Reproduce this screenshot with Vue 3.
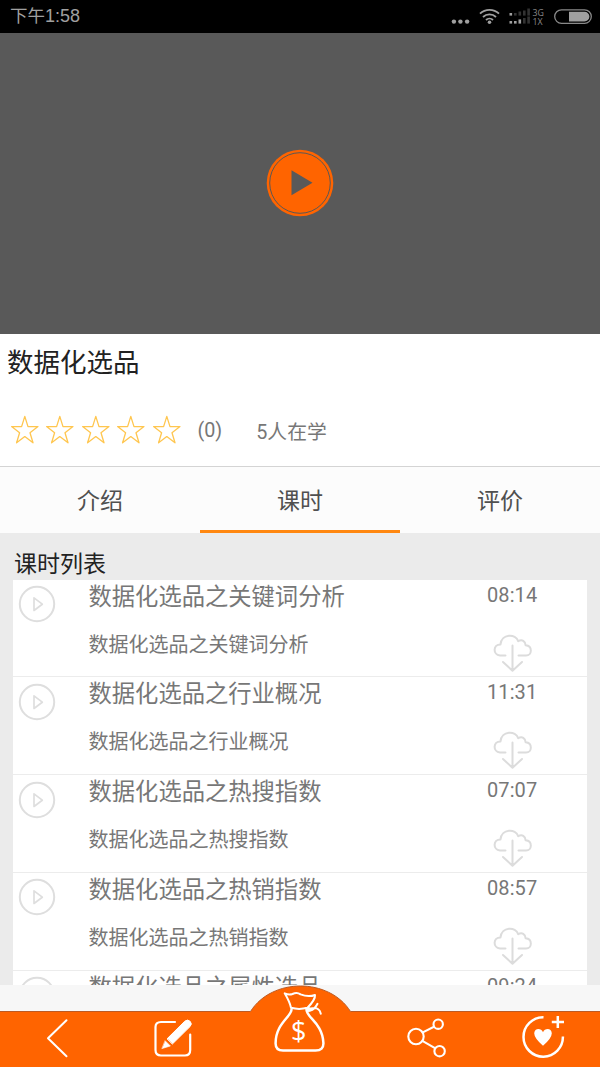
<script setup>
const stars = [0, 1, 2, 3, 4]
const tabs = ['介绍', '课时', '评价']
const lessons = [
  { title: '数据化选品之关键词分析', time: '08:14' },
  { title: '数据化选品之行业概况', time: '11:31' },
  { title: '数据化选品之热搜指数', time: '07:07' },
  { title: '数据化选品之热销指数', time: '08:57' },
  { title: '数据化选品之属性选品', time: '09:24' },
]
</script>

<template>
  <div class="screen">
    <header class="status">
      <span class="clock">下午<span class="digits">1:58</span></span>
      <svg class="status-icons" width="150" height="33" viewBox="0 0 150 33">
        <g fill="#a0a0a0">
          <circle cx="3.9" cy="21.6" r="2.2" /><circle cx="10.4" cy="21.6" r="2.2" /><circle cx="17.1" cy="21.6" r="2.2" />
          <circle cx="39.5" cy="22.3" r="1.8" />
        </g>
        <g fill="none" stroke="#a0a0a0" stroke-width="1.8">
          <path d="M30 13.7a13.5 13.5 0 0 1 19 0" />
          <path d="M33 17a9.3 9.3 0 0 1 13 0" />
          <path d="M36 20a5 5 0 0 1 7 0" />
        </g>
        <g fill="#a0a0a0">
          <rect x="59.5" y="13" width="2.6" height="2.6" />
          <rect x="59.5" y="21" width="2.6" height="2.6" /><rect x="64" y="21" width="2.6" height="2.6" /><rect x="68.5" y="19.4" width="2.6" height="4.2" />
        </g>
        <g fill="#333">
          <rect x="64" y="13" width="2.6" height="2.6" /><rect x="68.5" y="11.5" width="2.6" height="4.1" /><rect x="73" y="10.5" width="2.6" height="5.1" /><rect x="77.3" y="8.5" width="2.6" height="7.1" />
          <rect x="73" y="18" width="2.6" height="5.6" /><rect x="77.3" y="16.5" width="2.6" height="7.1" />
        </g>
        <text x="82.5" y="16" class="net">3G</text>
        <text x="82.5" y="24.5" class="net">1X</text>
        <rect x="104.7" y="9.8" width="36.6" height="13.6" rx="6.8" fill="none" stroke="#8a8a8a" stroke-width="1.3" />
        <path d="M119 11.7h15.5a4.9 4.9 0 0 1 0 9.8H119z" fill="#a0a0a0" />
      </svg>
    </header>

    <section class="video">
      <svg width="68" height="68" viewBox="0 0 68 68">
        <circle cx="34" cy="34" r="33.3" fill="#ff6400" />
        <circle cx="34" cy="34" r="30.3" fill="none" stroke="#5a5855" stroke-width="1" />
        <path d="M25.5 21.3V46.3L46.5 33.8z" fill="#595959" />
      </svg>
    </section>

    <section class="info">
      <h1>数据化选品</h1>
      <div class="rating">
        <svg v-for="s in stars" :key="s" class="star" width="35.6" height="32" viewBox="0 0 35.6 32">
          <path d="M17.8 1.4L21 11.6H31L23 17.8L26 27.8L17.8 21.6L9.6 27.8L12.6 17.8L4.6 11.6H14.6Z" />
        </svg>
        <span class="count">(0)</span>
        <span class="learners">5人在学</span>
      </div>
    </section>

    <nav class="tabs">
      <div v-for="(t, i) in tabs" :key="t" class="tab" :class="{ active: i === 1 }">{{ t }}</div>
    </nav>

    <main class="content">
      <h2>课时列表</h2>
      <ul class="lessons">
        <li v-for="l in lessons" :key="l.title">
          <svg class="play" width="38" height="38" viewBox="0 0 38 38">
            <circle cx="19" cy="19" r="17.2" stroke-width="2" />
            <path d="M16 12.8V25.5L24.3 19.2z" stroke-width="1.7" />
          </svg>
          <div class="names">
            <div class="name">{{ l.title }}</div>
            <div class="sub">{{ l.title }}</div>
          </div>
          <div class="side">
            <div class="time">{{ l.time }}</div>
            <svg class="cloud" width="40" height="40" viewBox="0 0 40 40">
              <path d="M12.5 22.5H7C-.4 21.8-.1 11.3 7.5 11.4C8.3.6 23 .1 25.2 8.2C29 5.8 32.5 8.2 32.6 12.3C39.8 13 39.2 22.5 33 22.5H25.5M19.5 12.5V37.5M10 29L19.5 37.8L29 29" />
            </svg>
          </div>
        </li>
      </ul>
    </main>

    <footer class="bottom">
      <svg width="600" height="82" viewBox="0 0 600 82">
        <rect width="600" height="82" fill="#f7f7f7" />
        <path d="M0 26.5H250.5C272-7.5 329-7.5 350.5 26.5H600V82H0z" fill="#ff6400" />
        <path d="M0 26.5H250.5C272-7.5 329-7.5 350.5 26.5H600" fill="none" stroke="#bd5a22" stroke-width="1" />
        <g fill="none" stroke="#fff" stroke-width="2" stroke-linejoin="round" stroke-linecap="round">
          <path d="M66.5 35.2L48 53.2L66.5 71.2" />
          <path d="M175 37H161C157.5 37 155.5 39 155.5 42V65C155.5 68.5 157.5 70.5 161 70.5H185C188.5 70.5 190.2 68.5 190.2 65V49.5" stroke-width="2.2" />
          <path d="M167.3 53.6L184.7 36.3Q187.5 33.8 190.2 36.4Q192.5 39 190 41.6L172.6 58.8Z" fill="#fff" stroke-width="1" />
          <path d="M165.3 55.9L170.4 61L162.2 63.5z" fill="#fff" stroke-width=".6" />

          <path d="M284.7 8.3Q289 10.2 292.5 9Q297 6.8 300.5 9.4Q308.5 12.5 315 10Q315.5 14.5 307.5 22.8Q299 25 291 22.8Q289.8 17 284.7 8.3Z" />
          <path d="M291.5 24.5C291.3 32 275.5 38.5 275.6 58.5Q275.6 65.5 283 65.6H315.5Q323.7 65.5 323.4 58C322.5 38 307 33 306.5 25" stroke-width="2.5" />
          <path d="M306 23.5Q312 29 317.5 18.8M307 25Q315 21.5 318.5 24.5Q320 25.5 320.8 28.8" stroke-width="2" />
          <circle cx="308.5" cy="24.5" r="2.5" fill="#fff" stroke="none" />

          <g stroke-width="2.1">
            <circle cx="416" cy="51.5" r="7.7" />
            <circle cx="438.2" cy="39.2" r="4.7" />
            <circle cx="439.6" cy="66.2" r="5.2" />
            <path d="M422.8 47.4L434 41.7M422.8 56.2L435 63.2" />
          </g>

          <path d="M543.5 32.3A19.7 19.7 0 1 0 562.9 51.5" stroke-width="2.5" stroke-linecap="butt" />
          <path d="M557.8 31V43M551.8 37H564" stroke-width="2.5" stroke-linecap="butt" />
        </g>
        <path d="M543 60.8Q534.2 53 534.2 48.2C534.4 42.7 541.3 42.6 543 47.2C544.7 42.6 551.7 42.7 551.8 48.2Q551.8 53 543 60.8Z" fill="#fff" />
        <text x="298.7" y="55.6" class="dollar">$</text>
      </svg>
    </footer>
  </div>
</template>

<style>
body { overflow: hidden; }
</style>

<style scoped>
.screen {
  width: 600px;
  height: 1067px;
  display: flex;
  flex-direction: column;
  overflow: hidden;
  background: #fff;
  font-family: Roboto, "Noto Sans CJK SC", sans-serif;
}
.status {
  height: 33px;
  flex: none;
  background: #000;
  display: flex;
  justify-content: space-between;
}
.clock {
  padding-left: 10px;
  font: 17.5px/33px "Liberation Sans", "Noto Sans CJK SC", sans-serif;
  color: #a0a0a0;
}
.digits { font-size: 18px; }
.net { font: 8.8px "Open Sans", sans-serif; fill: #888; }
.video {
  height: 300.5px;
  flex: none;
  background: #595959;
  display: flex;
  align-items: center;
  justify-content: center;
}
.info {
  height: 133px;
  flex: none;
  box-sizing: border-box;
  border-bottom: 1px solid #d4d4d4;
}
h1 {
  margin: 0;
  padding: 9px 0 0 7px;
  font-size: 26.5px;
  line-height: 40px;
  font-weight: 400;
  color: #222;
}
.rating {
  display: flex;
  align-items: center;
  margin-top: 32px;
  padding-left: 6.5px;
  height: 32px;
  color: #777;
  font-size: 19.8px;
}
.star path { fill: none; stroke: #ffc64f; stroke-width: 1.3; stroke-linejoin: round; }
.count { margin-left: 13px; }
.learners { margin-left: 34px; }
.tabs {
  height: 66.5px;
  flex: none;
  display: grid;
  grid-template-columns: repeat(3, 1fr);
  background: #fcfcfc;
}
.tab {
  height: 66.5px;
  padding-top: 2px;
  text-align: center;
  font-size: 23px;
  line-height: 66px;
  color: #505050;
  box-sizing: border-box;
}
.active { border-bottom: 3px solid #ff8710; }
.content {
  height: 452px;
  flex: none;
  background: #ebebeb;
  overflow: hidden;
}
h2 {
  margin: 0;
  padding: 15px 0 0 14px;
  height: 31.5px;
  font-size: 23px;
  line-height: 33px;
  font-weight: 400;
  color: #222;
}
.lessons {
  list-style: none;
  margin: 0 13px;
  padding: 0;
  background: #fff;
}
li {
  height: 97.8px;
  box-sizing: border-box;
  border-bottom: 1px solid #ececec;
  display: flex;
}
.play { margin: 5.5px 0 0 5px; flex: none; }
.play circle, .play path { fill: none; stroke: #dedede; stroke-linejoin: round; }
.names { margin-left: 32.5px; flex: 1; color: #777; white-space: nowrap; }
.name { padding-top: 1px; font-size: 23.3px; line-height: 32px; }
.sub { margin-top: 17px; font-size: 20px; line-height: 30px; }
.side { width: 100px; }
.time { font-size: 20px; line-height: 31px; color: #777; letter-spacing: .1px; }
.cloud { display: block; margin: 22px 0 0 6px; }
.cloud path { fill: none; stroke: #dcdcdc; stroke-width: 2; stroke-linecap: round; stroke-linejoin: round; }
.bottom { height: 82px; flex: none; }
.bottom svg { display: block; }
.dollar { font: 27px "Open Sans", sans-serif; fill: #fff; text-anchor: middle; }
</style>
